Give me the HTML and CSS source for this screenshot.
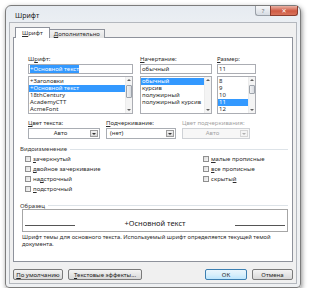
FILE: index.html
```html
<!DOCTYPE html>
<html lang="ru">
<head>
    <meta charset="UTF-8">
    <title>Шрифт</title>
    <link rel="stylesheet" href="styles.css">
</head>
<body>
    <div class="window">
        <div class="titlebar">
            <span class="title">Шрифт</span>
            <div class="caption-btns">
                <span class="cbtn help">?</span>
                <span class="cbtn close">✕</span>
            </div>
        </div>

        <div class="client">
            <div class="tabs">
                <span class="tab active"><u>Ш</u>рифт</span>
                <span class="tab"><u>Д</u>ополнительно</span>
            </div>

            <div class="panel">
                <div class="font-grid">
                    <div class="field">
                        <label>Ш<u>р</u>ифт:</label>
                        <div class="input"><span class="sel">+Основной текст</span></div>
                        <div class="list">
                            <div class="items">
                                <div>+Заголовки</div>
                                <div class="hl">+Основной текст</div>
                                <div>18thCentury</div>
                                <div>AcademyCTT</div>
                                <div>AcmeFont</div>
                            </div>
                            <div class="scroll">
                                <span class="up"></span>
                                <span class="thumb"></span>
                                <span class="down"></span>
                            </div>
                        </div>
                    </div>

                    <div class="field">
                        <label><u>Н</u>ачертание:</label>
                        <div class="input">обычный</div>
                        <div class="list">
                            <div class="items">
                                <div class="hl">обычный</div>
                                <div>курсив</div>
                                <div>полужирный</div>
                                <div>полужирный курсив</div>
                            </div>
                            <div class="scroll">
                                <span class="up"></span>
                                <span class="down"></span>
                            </div>
                        </div>
                    </div>

                    <div class="field">
                        <label><u>Р</u>азмер:</label>
                        <div class="input">11</div>
                        <div class="list">
                            <div class="items">
                                <div>8</div>
                                <div>9</div>
                                <div>10</div>
                                <div class="hl">11</div>
                                <div>12</div>
                            </div>
                            <div class="scroll">
                                <span class="up"></span>
                                <span class="thumb small"></span>
                                <span class="down"></span>
                            </div>
                        </div>
                    </div>
                </div>

                <div class="color-grid">
                    <div class="field">
                        <label><u>Ц</u>вет текста:</label>
                        <div class="combo">
                            <span class="value center">Авто</span>
                            <span class="arrow"></span>
                        </div>
                    </div>
                    <div class="field">
                        <label><u>П</u>одчеркивание:</label>
                        <div class="combo">
                            <span class="value">(нет)</span>
                            <span class="arrow"></span>
                        </div>
                    </div>
                    <div class="field disabled">
                        <label>Цвет подчеркивания:</label>
                        <div class="combo">
                            <span class="value center">Авто</span>
                            <span class="arrow"></span>
                        </div>
                    </div>
                </div>

                <div class="group-head">Видоизменение</div>
                <div class="checks">
                    <div class="check-col">
                        <div class="check"><span class="box"></span><span><u>з</u>ачеркнутый</span></div>
                        <div class="check"><span class="box"></span><span><u>д</u>войное зачеркивание</span></div>
                        <div class="check"><span class="box"></span><span>на<u>д</u>строчный</span></div>
                        <div class="check"><span class="box"></span><span><u>п</u>одстрочный</span></div>
                    </div>
                    <div class="check-col">
                        <div class="check"><span class="box"></span><span><u>м</u>алые прописные</span></div>
                        <div class="check"><span class="box"></span><span><u>в</u>се прописные</span></div>
                        <div class="check"><span class="box"></span><span>скрыты<u>й</u></span></div>
                    </div>
                </div>

                <div class="group-head">Образец</div>
                <div class="sample">
                    <span class="baseline"></span>
                    <span class="sample-text">+Основной текст</span>
                    <span class="baseline"></span>
                </div>
                <p class="note">Шрифт темы для основного текста. Используемый шрифт определяется текущей темой<br>документа.</p>
            </div>

            <div class="buttons">
                <span class="btn"><span><u>П</u>о умолчанию</span></span>
                <span class="btn wide"><span><u>Т</u>екстовые эффекты...</span></span>
                <span class="btn ok">ОК</span>
                <span class="btn">Отмена</span>
            </div>
        </div>
    </div>
</body>
</html>
```

FILE: styles.css
```css
* {
    margin: 0;
    padding: 0;
    box-sizing: border-box;
}

body {
    background: #fff;
    font-family: "Noto Sans", "DejaVu Sans", sans-serif;
    font-size: 6px;
    color: #2b2b2b;
}

u {
    text-decoration-thickness: 0.5px;
}

.window {
    margin: 5px 0 0 5px;
    width: 296px;
    height: 283px;
    border: 1px solid #7c7c7c;
    border-radius: 6px 6px 4px 4px;
    background: linear-gradient(#e6ebf1, #f2f4f6 40px, #eef0f2);
    box-shadow: 1px 2px 5px rgba(0, 0, 0, 0.45);
    padding: 0 3px 3px;
    display: flex;
    flex-direction: column;
}

.titlebar {
    height: 16px;
    flex: none;
    display: flex;
    justify-content: space-between;
    align-items: flex-start;
}

.title {
    font-size: 7px;
    padding: 5px 0 0 6px;
    color: #222;
}

.caption-btns {
    display: flex;
    margin-right: -1px;
}

.cbtn {
    height: 10px;
    display: flex;
    align-items: center;
    justify-content: center;
    font-size: 6px;
}

.help {
    width: 15px;
    border: 1px solid #9aa0a8;
    border-top: none;
    border-right: none;
    border-radius: 0 0 0 3px;
    background: linear-gradient(#f6f7f9, #d7dce3);
    color: #6a6f78;
}

.close {
    width: 28px;
    border: 1px solid #8a3c2e;
    border-top: none;
    border-radius: 0 0 3px 0;
    background: linear-gradient(#eab3a6, #cf5a43 55%, #d8745c);
    color: #fff;
    font-weight: bold;
}

.client {
    flex: 1;
    border: 1px solid #b4b8be;
    background: #f0f0f0;
    padding: 4px 3px 0;
    display: flex;
    flex-direction: column;
}

.tabs {
    display: flex;
    align-items: flex-end;
    height: 11px;
    margin: 0 0 -1px 2px;
    position: relative;
    z-index: 1;
}

.tab {
    height: 9px;
    line-height: 8px;
    padding: 0 4px;
    border: 1px solid #8e929b;
    border-bottom: none;
    background: linear-gradient(#f3f3f3, #e2e2e2);
}

.tab.active {
    height: 11px;
    line-height: 10px;
    padding: 0 6px;
    background: #fff;
    margin-right: -1px;
    position: relative;
    z-index: 2;
}

.panel {
    flex: 1;
    border: 1px solid #8e929b;
    background: #fff;
    padding: 17px 4px 0 6px;
}

.font-grid {
    display: grid;
    grid-template-columns: 105px 72px 37px;
    column-gap: 7px;
    margin-left: 8px;
}

.font-grid .field:last-child {
    margin-left: -2px;
}

label {
    display: block;
    height: 9px;
    line-height: 8px;
}

.input {
    height: 10px;
    line-height: 8px;
    border: 1px solid #abadb3;
    padding-left: 1px;
    white-space: nowrap;
    overflow: hidden;
}

.sel {
    background: #3399ff;
    color: #fff;
}

.list {
    display: flex;
    height: 38px;
    margin-top: 2px;
    border: 1px solid #abadb3;
}

.items {
    flex: 1;
    padding-top: 0.5px;
    white-space: nowrap;
    overflow: hidden;
}

.items div {
    height: 7px;
    line-height: 7px;
    padding-left: 1px;
}

.items .hl {
    background: #3399ff;
    color: #fff;
}

.scroll {
    width: 7px;
    display: flex;
    flex-direction: column;
    align-items: center;
    background: #f4f4f4;
    border-left: 1px solid #ececec;
}

.up,
.down {
    width: 0;
    height: 0;
    margin: 2px 0;
    border-left: 2px solid transparent;
    border-right: 2px solid transparent;
}

.up {
    border-bottom: 2px solid #606060;
}

.down {
    border-top: 2px solid #606060;
    margin-top: auto;
}

.thumb {
    width: 6px;
    height: 13px;
    margin-top: 2px;
    border: 1px solid #9ea4ac;
    border-radius: 1px;
    background: linear-gradient(90deg, #f1f2f4, #d8dbe0);
}

.thumb.small {
    height: 9px;
}

.color-grid {
    display: grid;
    grid-template-columns: 72px 70px 68px;
    column-gap: 6px;
    margin: 5px 0 0 8px;
}

.combo {
    height: 11px;
    display: flex;
    border: 1px solid #a9adb3;
    background: #fff;
}

.value {
    flex: 1;
    line-height: 9px;
    padding-left: 3px;
}

.value.center {
    text-align: center;
}

.arrow {
    width: 8px;
    margin: 1px;
    border: 1px solid #9c9c9c;
    background: linear-gradient(#f2f2f2, #d9d9d9);
    display: flex;
    align-items: center;
    justify-content: center;
}

.arrow::after {
    content: "";
    border-left: 2px solid transparent;
    border-right: 2px solid transparent;
    border-top: 2px solid #333;
}

.disabled {
    color: #a3a3a3;
}

.disabled .combo {
    border-color: #cfd2d6;
    background: #f7f7f7;
}

.disabled .arrow {
    border-color: #d6d6d6;
    background: #f4f4f4;
}

.disabled .arrow::after {
    border-top-color: #b0b0b0;
}

.group-head {
    display: flex;
    align-items: center;
    gap: 3px;
    height: 8px;
    margin-top: 6px;
    color: #333;
}

.group-head::after {
    content: "";
    flex: 1;
    height: 1px;
    background: #dde3e8;
}

.checks {
    display: flex;
    margin: 1px 0 0 5px;
}

.check-col:first-child {
    width: 178px;
}

.check {
    height: 10px;
    display: flex;
    align-items: center;
    gap: 2px;
}

.box {
    width: 6px;
    height: 6px;
    border: 1px solid #8f8f8f;
    background: linear-gradient(135deg, #dcdcdc, #f7f7f7);
}

.checks + .group-head {
    margin-top: 8px;
    height: 7px;
}

.sample {
    height: 23px;
    margin-left: 2px;
    border: 1px solid #a6a6a6;
    display: flex;
    justify-content: space-between;
    align-items: flex-end;
    padding: 0 2px 5px;
}

.baseline {
    width: 50px;
    height: 1px;
    background: #555;
}

.sample-text {
    font-size: 7.5px;
    line-height: 9px;
    margin-bottom: -2px;
    color: #222;
}

.note {
    margin: 2px 0 0 2px;
    line-height: 7px;
    font-size: 5.8px;
}

.buttons {
    display: flex;
    gap: 5px;
    height: 11px;
    margin: 7px 0 3px;
}

.btn {
    width: 50px;
    display: flex;
    align-items: center;
    justify-content: center;
    border: 1px solid #7a7a7a;
    border-radius: 2px;
    background: linear-gradient(#f4f4f4, #e6e6e6 50%, #d8d8d8);
    color: #222;
}

.btn.wide {
    width: 74px;
}

.btn.ok {
    width: 42px;
    margin-left: auto;
    border-color: #3c7fb1;
    background: linear-gradient(#eaf6fd, #d9f0fc 50%, #bee6fd);
}

.btn:last-child {
    width: 41px;
}
```
